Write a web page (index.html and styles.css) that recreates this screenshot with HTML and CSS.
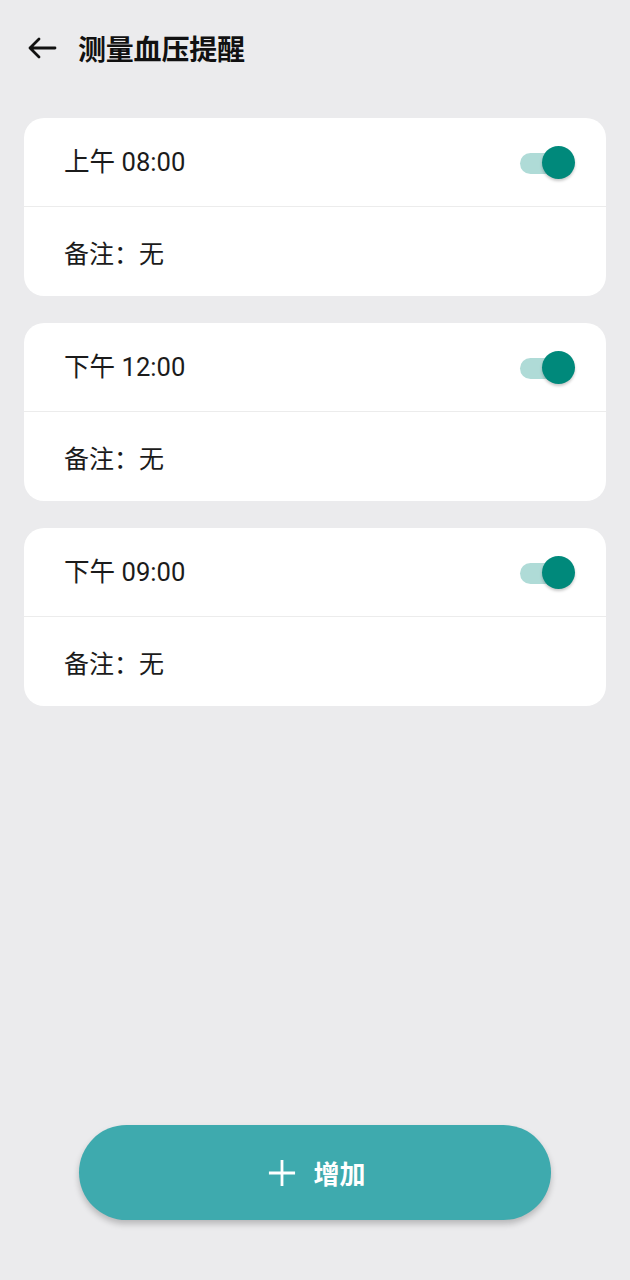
FILE: index.html
```html
<!DOCTYPE html>
<html lang="zh-CN">
<head>
<meta charset="utf-8">
<title>测量血压提醒</title>
<link rel="stylesheet" href="styles.css">
</head>
<body>
<div class="page">
  <header class="header">
    <svg class="back" width="30" height="22" viewBox="0 0 30 22" aria-hidden="true">
      <path d="M28 11H3M12 2L3 11l9 9" fill="none" stroke="#111" stroke-width="2.8" stroke-linecap="round" stroke-linejoin="round"/>
    </svg>
    <h1 class="title">测量血压提醒</h1>
  </header>

  <main class="list">
    <section class="card">
      <div class="row row-time">
        <span class="label">上午 08:00</span>
        <span class="toggle"><span class="track"></span><span class="thumb"></span></span>
      </div>
      <div class="row row-note"><span class="label">备注：无</span></div>
    </section>
    <section class="card">
      <div class="row row-time">
        <span class="label">下午 12:00</span>
        <span class="toggle"><span class="track"></span><span class="thumb"></span></span>
      </div>
      <div class="row row-note"><span class="label">备注：无</span></div>
    </section>
    <section class="card">
      <div class="row row-time">
        <span class="label">下午 09:00</span>
        <span class="toggle"><span class="track"></span><span class="thumb"></span></span>
      </div>
      <div class="row row-note"><span class="label">备注：无</span></div>
    </section>
  </main>

  <div class="footer">
    <button class="add-btn" type="button">
      <svg class="plus" width="30" height="30" viewBox="0 0 30 30" aria-hidden="true">
        <path d="M15 1v28M1 15h28" fill="none" stroke="#fff" stroke-width="3"/>
      </svg>
      <span class="add-text">增加</span>
    </button>
  </div>
</div>
</body>
</html>
```

FILE: styles.css
```css
* { box-sizing: border-box; }

html, body {
  margin: 0;
  padding: 0;
  background: #ebebed;
}

body {
  font-family: "Noto Sans CJK SC", "Noto Sans", Roboto, sans-serif;
  color: #1b1b1b;
}

.page {
  min-height: 1280px;
  display: flex;
  flex-direction: column;
}

.header {
  height: 96px;
  display: flex;
  align-items: center;
  padding-left: 27px;
}

.back {
  display: block;
  margin-right: 21px;
}

.title {
  margin: 0;
  font-size: 28px;
  font-weight: 700;
  color: #111;
  letter-spacing: -0.2px;
  line-height: 1;
}

.list {
  padding: 22px 24px 0;
  display: flex;
  flex-direction: column;
  gap: 27px;
}

.card {
  background: #fff;
  border-radius: 20px;
  overflow: hidden;
}

.row {
  height: 89px;
  display: flex;
  align-items: center;
  justify-content: space-between;
  padding: 2px 31px 0 40px;
}

.row-time {
  border-bottom: 1px solid #ececec;
}

.label {
  font-size: 25px;
  line-height: 1;
  color: #1b1b1b;
}

.row-time .label {
  font-family: Roboto, "Noto Sans CJK SC", sans-serif;
  font-size: 25.6px;
}

.toggle {
  position: relative;
  width: 55px;
  height: 34px;
  flex: none;
}

.track {
  position: absolute;
  left: 0;
  top: 7px;
  width: 46px;
  height: 21px;
  border-radius: 11px;
  background: #afdbd7;
}

.thumb {
  position: absolute;
  right: 0;
  top: 0;
  width: 33px;
  height: 33px;
  border-radius: 50%;
  background: #00897b;
  box-shadow: 0 2px 3px rgba(0, 0, 0, 0.22);
}

.footer {
  margin-top: auto;
  padding-bottom: 60px;
  display: flex;
  justify-content: center;
}

.add-btn {
  width: 472px;
  height: 95px;
  border: none;
  border-radius: 48px;
  background: #3eaaae;
  box-shadow: 0 4px 6px rgba(0, 0, 0, 0.22);
  display: flex;
  align-items: center;
  justify-content: center;
  gap: 17px;
  padding: 0 0 0 4px;
  font-family: "Noto Sans CJK SC", sans-serif;
}

.plus {
  display: block;
  width: 28px;
  height: 28px;
}

.add-text {
  color: #fff;
  font-size: 26px;
  font-weight: 700;
  line-height: 1;
}
```
